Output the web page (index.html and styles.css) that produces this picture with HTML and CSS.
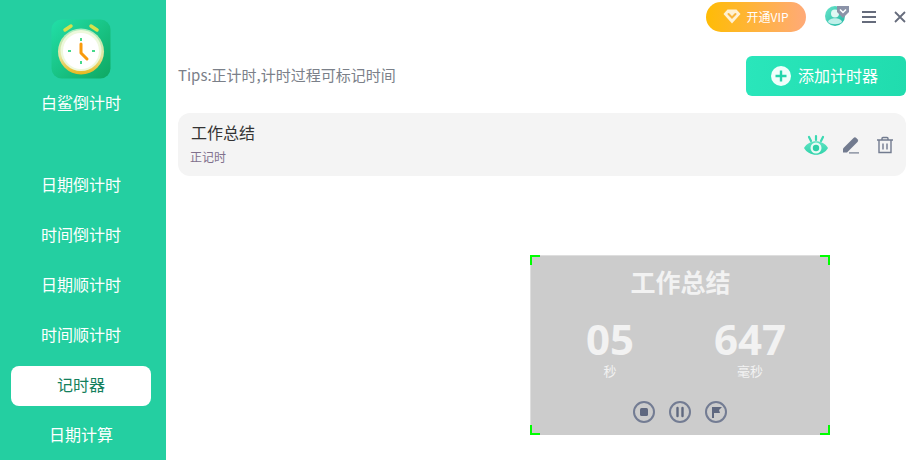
FILE: index.html
```html
<!DOCTYPE html>
<html lang="zh-CN">
<head>
    <meta charset="UTF-8">
    <meta name="viewport" content="width=device-width, initial-scale=1.0">
    <title>白鲨倒计时</title>
    <link rel="stylesheet" href="styles.css">
</head>
<body>
    <aside class="sidebar">
        <svg class="logo" width="60" height="60" viewBox="0 0 60 60">
            <defs>
                <linearGradient id="logoBg" x1="0" y1="0" x2="1" y2="1">
                    <stop offset="0" stop-color="#22dfa8"/>
                    <stop offset="1" stop-color="#0fa862"/>
                </linearGradient>
                <linearGradient id="logoRim" x1="0" y1="0" x2="0" y2="1">
                    <stop offset="0" stop-color="#a8ecc0"/>
                    <stop offset="0.6" stop-color="#e6e5a0"/>
                    <stop offset="1" stop-color="#eab71c"/>
                </linearGradient>
            </defs>
            <rect x="0.5" y="0.5" width="59" height="59" rx="10" fill="url(#logoBg)"/>
            <path d="M14 11l6-4M46 11l-6-4" stroke="#d7e04c" stroke-width="3.500" stroke-linecap="round"/>
            <circle cx="30" cy="32.500" r="23" fill="url(#logoRim)"/>
            <circle cx="30" cy="31.500" r="20.500" fill="#eef8dc"/>
            <circle cx="30" cy="32" r="18" fill="#fff"/>
            <path d="M30 19v3M30 42v3M17 32h3M41 32h3" stroke="#45d98a" stroke-width="2"/>
            <path d="M30 25v9l6 6" fill="none" stroke="#f99a0c" stroke-width="3" stroke-linecap="round" stroke-linejoin="round"/>
        </svg>
        <div class="app-name">白鲨倒计时</div>
        <nav class="nav">
            <a class="nav-item">日期倒计时</a>
            <a class="nav-item">时间倒计时</a>
            <a class="nav-item">日期顺计时</a>
            <a class="nav-item">时间顺计时</a>
            <a class="nav-item active">记时器</a>
            <a class="nav-item">日期计算</a>
        </nav>
    </aside>

    <main class="main">
        <header class="topbar">
            <button class="vip-btn">
                <svg width="18" height="15" viewBox="0 0 18 15">
                    <path d="M4.500 0.500h9L17.500 5 9 14.500 0.500 5z" fill="#fff" fill-opacity="0.8"/>
                    <path d="M5.500 5L9 8.500 12.500 5" fill="none" stroke="#f9b53c" stroke-width="2" stroke-linecap="round"/>
                </svg>
                <span class="vip-text">开通VIP</span>
            </button>
            <svg class="avatar" width="24" height="21" viewBox="0 0 24 21">
                <defs>
                    <linearGradient id="avatarBg" x1="0" y1="0" x2="1" y2="1">
                        <stop offset="0" stop-color="#6ae6cb"/>
                        <stop offset="1" stop-color="#1fb5a2"/>
                    </linearGradient>
                </defs>
                <circle cx="10" cy="11" r="10" fill="url(#avatarBg)"/>
                <circle cx="10" cy="8.500" r="4" fill="#dff8f4"/>
                <path d="M3 17c1-5 13-5 14 0-3 3-11 3-14 0z" fill="#bff0ea"/>
                <path d="M12 1h12v6l-6 6-6-6z" fill="#8b93a8"/>
                <path d="M15 4.500l3 3 3-3" fill="none" stroke="#fff" stroke-width="1.500"/>
            </svg>
            <svg class="menu-icon" width="14" height="12" viewBox="0 0 14 12">
                <path d="M0 1h14M0 6h14M0 11h14" stroke="#666c7c" stroke-width="2"/>
            </svg>
            <svg class="close-icon" width="12" height="12" viewBox="0 0 12 12">
                <path d="M1 1l10 10M11 1L1 11" stroke="#666c7c" stroke-width="1.800"/>
            </svg>
        </header>

        <div class="tips-row">
            <span class="tips">Tips:正计时,计时过程可标记时间</span>
            <button class="add-btn">
                <svg width="20" height="20" viewBox="0 0 20 20">
                    <circle cx="10" cy="10" r="10" fill="#f0fffb"/>
                    <path d="M10 4.500v11M4.500 10h11" stroke="#25d5ab" stroke-width="2.400"/>
                </svg>
                <span class="add-text">添加计时器</span>
            </button>
        </div>

        <div class="timer-card">
            <div class="timer-info">
                <div class="timer-title">工作总结</div>
                <div class="timer-type">正记时</div>
            </div>
            <div class="timer-actions">
                <svg class="eye-icon" width="24" height="22" viewBox="0 0 24 22">
                    <defs>
                        <linearGradient id="eyeBg" x1="0" y1="0" x2="0" y2="1">
                            <stop offset="0" stop-color="#5fe3c3"/>
                            <stop offset="1" stop-color="#2fd3aa"/>
                        </linearGradient>
                    </defs>
                    <path d="M12 6V2M7 7L5 3M17 7l2-4" stroke="#3ad9b2" stroke-width="2.200" stroke-linecap="round"/>
                    <path d="M0 14c5-9 19-9 24 0-5 9-19 9-24 0z" fill="url(#eyeBg)"/>
                    <circle cx="12" cy="14" r="5.500" fill="#e8fbf5"/>
                    <circle cx="12" cy="14" r="3.200" fill="#2fd0a8"/>
                </svg>
                <svg width="18" height="18" viewBox="0 0 18 18">
                    <path d="M1 16.500v-4L11.500 2a2 2 0 0 1 2.800 0l1.200 1.200a2 2 0 0 1 0 2.800L5 16.500z" fill="#727b8f"/>
                    <path d="M7 16.900h10" stroke="#727b8f" stroke-width="1.200"/>
                </svg>
                <svg width="18" height="18" viewBox="0 0 18 18">
                    <path d="M1 4h16M6 4V2.500a1 1 0 0 1 1-1h4a1 1 0 0 1 1 1V4M3 4v12.500h12V4M7 7.500v6M11 7.500v6" fill="none" stroke="#727b8f" stroke-width="1.400"/>
                </svg>
            </div>
        </div>
    </main>

    <section class="float-panel">
        <i class="corner tl"></i><i class="corner tr"></i><i class="corner bl"></i><i class="corner br"></i>
        <div class="panel-title">工作总结</div>
        <div class="panel-time">
            <div class="time-col">
                <div class="time-num">05</div>
                <div class="time-unit">秒</div>
            </div>
            <div class="time-col">
                <div class="time-num">647</div>
                <div class="time-unit">毫秒</div>
            </div>
        </div>
        <div class="panel-ctrl">
            <svg width="22" height="22" viewBox="0 0 22 22">
                <circle cx="11" cy="11" r="10" fill="none" stroke="#737c93" stroke-width="2"/>
                <rect x="7" y="7" width="8" height="8" rx="1.500" fill="#5f687f"/>
            </svg>
            <svg width="22" height="22" viewBox="0 0 22 22">
                <circle cx="11" cy="11" r="10" fill="none" stroke="#737c93" stroke-width="2"/>
                <path d="M8.500 7v8M13.500 7v8" stroke="#5f687f" stroke-width="2.400" stroke-linecap="round"/>
            </svg>
            <svg width="22" height="22" viewBox="0 0 22 22">
                <circle cx="11" cy="11" r="10" fill="none" stroke="#737c93" stroke-width="2"/>
                <path d="M7 6h10l-3 3 1 3H9v5H7z" fill="#5f687f"/>
            </svg>
        </div>
    </section>
</body>
</html>
```

FILE: styles.css
```css
* {
    box-sizing: border-box;
}
html, body {
    height: 100%;
}
body {
    margin: 0;
    display: flex;
    overflow: hidden;
    background: #fff;
    font-family: "Noto Sans CJK SC", "Open Sans", sans-serif;
}
svg {
    display: block;
    flex: none;
}

.sidebar {
    width: 166px;
    flex: none;
    background: #24cfa1;
    padding-top: 19px;
    display: flex;
    flex-direction: column;
    align-items: center;
}
.logo {
    margin-left: -4px;
}
.app-name {
    margin-top: 11px;
    margin-left: -4px;
    line-height: 24px;
    font-size: 16px;
    color: #fff;
}
.nav {
    margin-top: 52px;
    display: flex;
    flex-direction: column;
    gap: 10px;
}
.nav-item {
    width: 140px;
    height: 40px;
    margin-left: -4px;
    padding-bottom: 4px;
    display: flex;
    align-items: center;
    justify-content: center;
    border-radius: 8px;
    font-size: 16px;
    color: #fff;
}
.nav-item.active {
    background: #fff;
    color: #14805c;
}

.main {
    flex: 1;
    min-width: 0;
    padding: 0 15px 0 12px;
}
.topbar {
    height: 32px;
    padding-top: 1px;
    display: flex;
    align-items: center;
    margin-right: -15px;
}
.vip-btn {
    width: 100px;
    height: 30px;
    margin-left: auto;
    padding-bottom: 2px;
    display: flex;
    align-items: center;
    justify-content: center;
    gap: 5px;
    border: none;
    border-radius: 15px;
    background: linear-gradient(90deg, #ffbc05, #ffaa78);
    color: #fff;
    font-family: inherit;
    font-size: 12px;
}
.avatar {
    margin: -3px 0 0 19px;
}
.menu-icon {
    margin: 0 0 0 13px;
}
.close-icon {
    margin: 1px 15px 0 18px;
}

.tips-row {
    margin-top: 24px;
    height: 40px;
    display: flex;
    align-items: center;
    justify-content: space-between;
}
.tips {
    margin-top: -4px;
    font-size: 15px;
    color: #7b8089;
}
.add-btn {
    width: 160px;
    height: 40px;
    padding: 0 3px 0 0;
    display: flex;
    align-items: center;
    justify-content: center;
    gap: 7px;
    border: none;
    border-radius: 6px;
    background: linear-gradient(100deg, #2ae6bb, #20dcae);
    color: #fff;
    font-family: inherit;
    font-size: 16px;
}
.add-text {
    margin-top: -2px;
}

.timer-card {
    margin-top: 17px;
    height: 63px;
    padding: 0 12px;
    display: flex;
    align-items: center;
    justify-content: space-between;
    border-radius: 12px;
    background: #f4f4f4;
}
.timer-info {
    margin-top: -3px;
}
.timer-title {
    padding-left: 1px;
    line-height: 24px;
    font-size: 16px;
    color: #333;
}
.timer-type {
    margin-top: 4px;
    line-height: 18px;
    font-size: 12px;
    color: #80708c;
}
.timer-actions {
    display: flex;
    align-items: center;
    gap: 16px;
}
.eye-icon {
    margin-right: -2px;
}

.float-panel {
    position: absolute;
    left: 531px;
    top: 255px;
    width: 299px;
    height: 180px;
    background: #cccccc;
    box-shadow: inset 0 1px #dedede, -1px 0 #dedede;
    display: flex;
    flex-direction: column;
    align-items: center;
    color: #f2f2f2;
}
.corner {
    position: absolute;
    width: 10px;
    height: 10px;
    border: 0 solid #00ff00;
}
.corner.tl { left: -1px; top: 0; border-width: 2px 0 0 2px; }
.corner.tr { right: 0; top: 0; border-width: 2px 2px 0 0; }
.corner.bl { left: -1px; bottom: 0; border-width: 0 0 2px 2px; }
.corner.br { right: 0; bottom: 0; border-width: 0 2px 2px 0; }
.panel-title {
    margin-top: 8px;
    line-height: 36px;
    font-size: 25px;
    font-weight: 700;
}
.panel-time {
    margin-top: 16px;
    margin-left: -1px;
    display: flex;
}
.time-col {
    width: 140px;
    display: flex;
    flex-direction: column;
    align-items: center;
}
.time-num {
    line-height: 48px;
    font-family: "Open Sans", sans-serif;
    font-size: 42px;
    font-weight: 700;
}
.time-unit {
    margin-top: -1px;
    line-height: 18px;
    font-size: 13px;
}
.panel-ctrl {
    margin-top: 21px;
    margin-left: -2px;
    display: flex;
    gap: 14px;
}
```
